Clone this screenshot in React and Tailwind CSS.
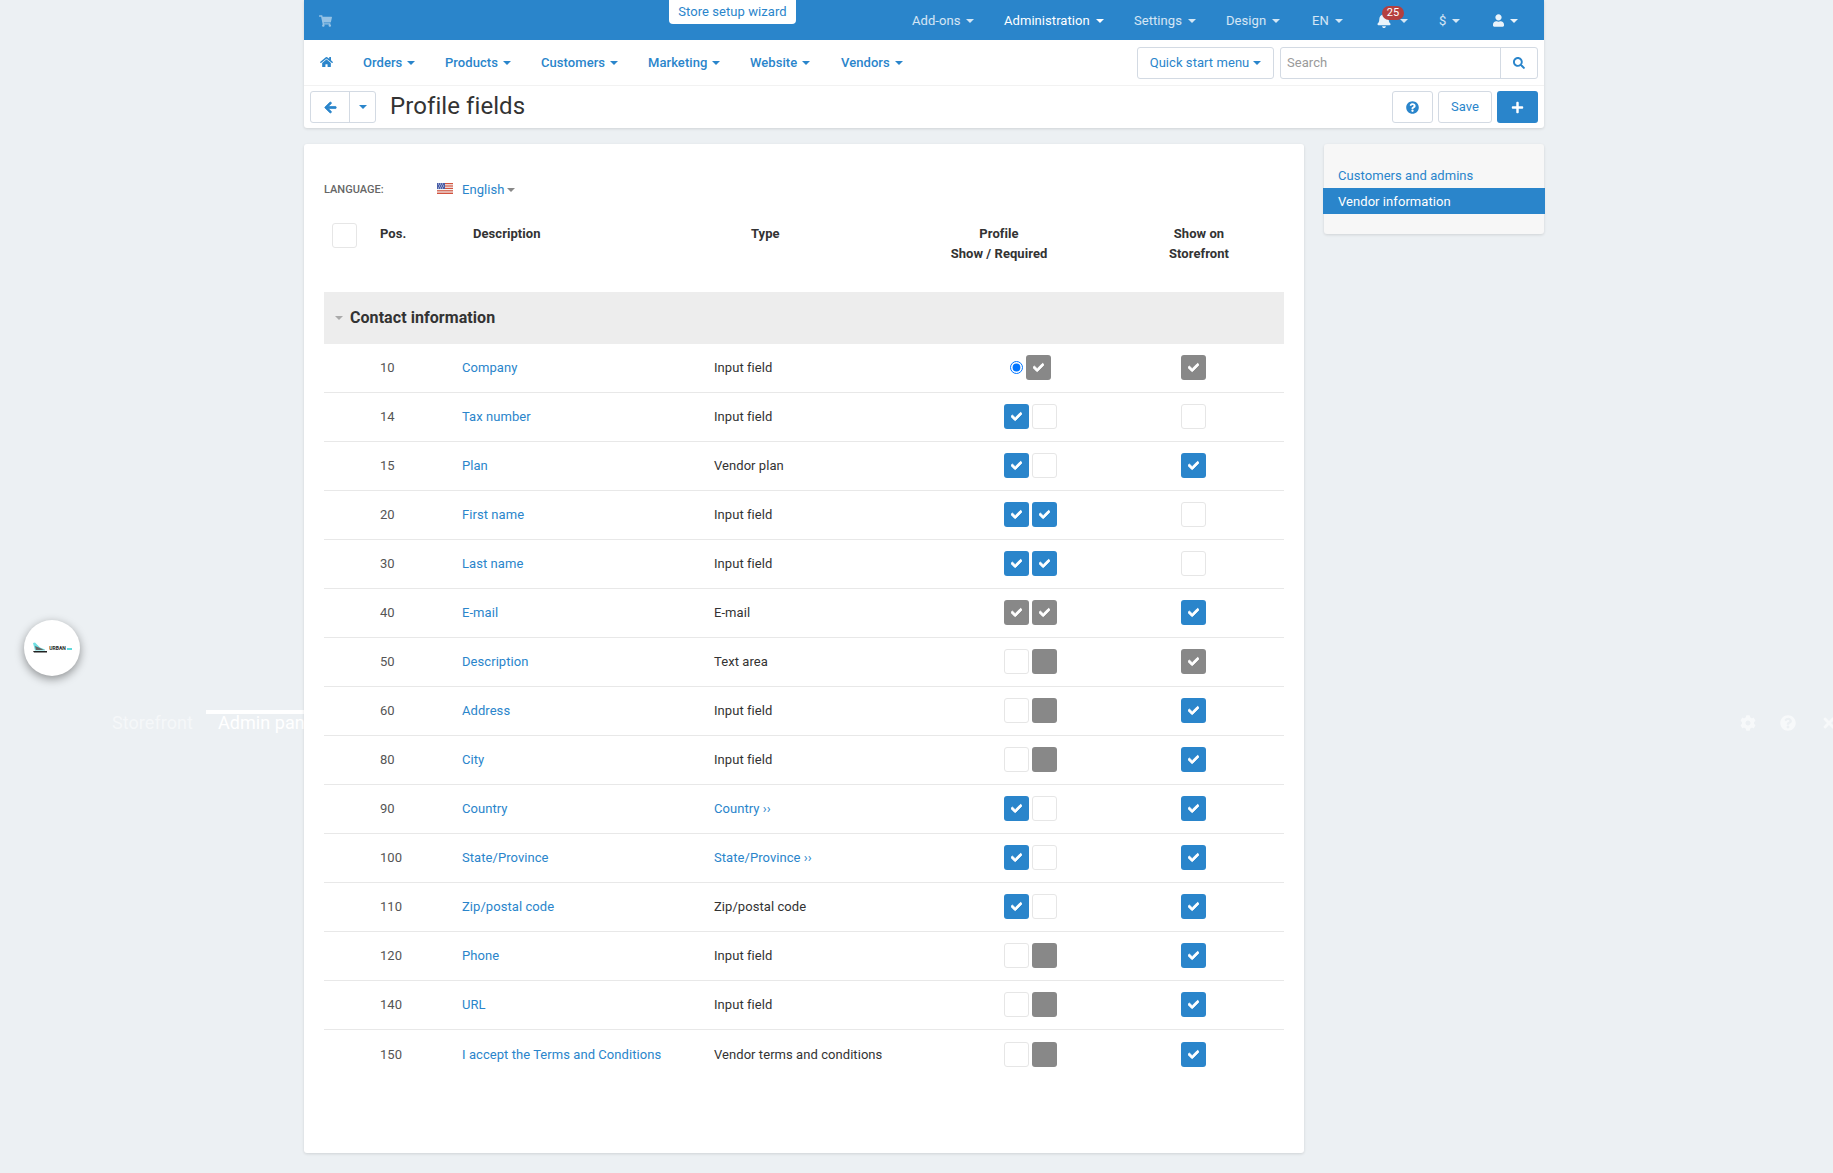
import React from "react";
import { FaHome, FaShoppingCart, FaBell, FaUser, FaSearch, FaQuestionCircle, FaPlus, FaArrowLeft, FaCheck, FaCog, FaTimes } from "react-icons/fa";

const Caret = ({ className = "" }) => (
  <span className={"inline-block w-0 h-0 border-x-[4px] border-t-[4px] border-x-transparent border-t-current align-middle " + className} />
);

const topItems = [
  ["Add-ons", "w-[92px]", "text-white/80"],
  ["Administration", "w-[130px]", "text-white"],
  ["Settings", "w-[92px]", "text-white/80"],
  ["Design", "w-[86px]", "text-white/80"],
  ["EN", "w-[66px]", "text-white/80"],
];

const navItems = [
  ["Orders", "w-[82px]"],
  ["Products", "w-[96px]"],
  ["Customers", "w-[107px]"],
  ["Marketing", "w-[102px]"],
  ["Website", "w-[91px]"],
  ["Vendors", "w-[91px]"],
];

const rows = [
  ["10", "Company", "Input field", false, "radio", "gc", "gc"],
  ["14", "Tax number", "Input field", false, "bc", "u", "u"],
  ["15", "Plan", "Vendor plan", false, "bc", "u", "bc"],
  ["20", "First name", "Input field", false, "bc", "bc", "u"],
  ["30", "Last name", "Input field", false, "bc", "bc", "u"],
  ["40", "E-mail", "E-mail", false, "gc", "gc", "bc"],
  ["50", "Description", "Text area", false, "u", "g", "gc"],
  ["60", "Address", "Input field", false, "u", "g", "bc"],
  ["80", "City", "Input field", false, "u", "g", "bc"],
  ["90", "Country", "Country ››", true, "bc", "u", "bc"],
  ["100", "State/Province", "State/Province ››", true, "bc", "u", "bc"],
  ["110", "Zip/postal code", "Zip/postal code", false, "bc", "u", "bc"],
  ["120", "Phone", "Input field", false, "u", "g", "bc"],
  ["140", "URL", "Input field", false, "u", "g", "bc"],
  ["150", "I accept the Terms and Conditions", "Vendor terms and conditions", false, "u", "g", "bc"],
];

function Box({ kind }) {
  if (kind === "u") return <span className="block w-[25px] h-[25px] rounded-[3px] bg-white border border-[#e6e6e6]" />;
  if (kind === "g") return <span className="block w-[25px] h-[25px] rounded-[3px] bg-[#888888]" />;
  const bg = kind === "bc" ? "bg-[#2a85cb]" : "bg-[#888888]";
  return (
    <span className={"flex items-center justify-center w-[25px] h-[25px] rounded-[3px] text-white " + bg}>
      <FaCheck className="w-[11px] h-[11px]" stroke="currentColor" strokeWidth={40} />
    </span>
  );
}

function FlagUS() {
  return (
    <svg width="16" height="11" viewBox="0 0 16 11" className="block">
      <rect width="16" height="11" fill="#f4f4f4" />
      <rect y="0" width="16" height="1.2" fill="#d2543f" />
      <rect y="2.4" width="16" height="1.2" fill="#d2543f" />
      <rect y="4.8" width="16" height="1.2" fill="#d2543f" />
      <rect y="7.2" width="16" height="1.2" fill="#d2543f" />
      <rect y="9.6" width="16" height="1.4" fill="#d2543f" />
      <rect width="8" height="6" fill="#4a5fa8" />
      <path d="M1 1h1M3 1h1M5 1h1M2 3h1M4 3h1M6 3h1M1 5h1M3 5h1M5 5h1" stroke="#fff" strokeWidth="0.8" />
    </svg>
  );
}

export default function App() {
  return (
    <div className="relative h-[1173px] overflow-hidden bg-[#ecf0f3] font-['Roboto',sans-serif] text-[13px] tracking-[0.06px] text-[#333333]">
      {/* dimmed layer under the admin page */}
      <div className="absolute left-[206px] top-[710px] w-[98px] h-[4px] bg-white" />
      <span className="absolute left-[112px] top-[712px] text-[18px] leading-[22px] text-white/50">Storefront</span>
      <span className="absolute left-[218px] top-[712px] text-[18px] leading-[22px] text-white">Admin panel</span>
      <FaCog className="absolute left-[1740px] top-[715px] w-[16px] h-[16px] text-white/60" />
      <FaQuestionCircle className="absolute left-[1780px] top-[715px] w-[16px] h-[16px] text-white/60" />
      <FaTimes className="absolute left-[1822px] top-[715px] w-[14px] h-[16px] text-white/60" />

      {/* floating logo */}
      <div className="absolute left-[24px] top-[620px] z-20 w-[56px] h-[56px] rounded-full bg-white shadow-[0_3px_10px_rgba(0,0,0,0.4)] flex items-center justify-center gap-[1px]">
        <svg width="16" height="12" viewBox="0 0 16 12">
          <path d="M1 9h14v1.5H2z" fill="#222" />
          <path d="M1 1l2-.5 5 5 5 2v1H3z" fill="#6fdfe2" />
          <path d="M3 4l5 2 4 2H4z" fill="#666" />
        </svg>
        <span className="text-[5px] leading-none font-bold text-[#222] tracking-normal">URBAN</span>
        <span className="w-[5px] h-[2px] mt-[2px] bg-[#5fd9dc]" />
      </div>

      <div className="relative z-10 ml-[304px] w-[1240px]">
        {/* header */}
        <div className="bg-white rounded-b-[3px] shadow-[0_1px_3px_rgba(0,0,0,0.12)]">
          <div className="relative h-[40px] bg-[#2a85cb] flex items-center pl-[15px]">
            <FaShoppingCart className="w-[13px] h-[12px] mt-[1px] text-white/50" />
            <button className="absolute left-[365px] top-0 w-[127px] h-[24px] bg-white rounded-b-[4px] text-[#2a85cb] text-[13px] leading-[22px]">
              Store setup wizard
            </button>
            <div className="ml-auto flex items-center pt-[1px]">
              {topItems.map(([t, w, c]) => (
                <div key={t} className={"flex items-center gap-[6px] " + w + " " + c}>
                  <span>{t}</span>
                  <Caret />
                </div>
              ))}
              <div className="relative w-[61px] flex items-center gap-[9px] text-white/80 -ml-[1px] mr-[1px]">
                <FaBell className="w-[14px] h-[15px] text-white/90" />
                <Caret />
                <span className="absolute left-[5px] top-[-7px] w-[22px] h-[14px] rounded-[7px] bg-[#b53f3f] text-white text-[11px] leading-[14px] text-center tracking-normal">25</span>
              </div>
              <div className="w-[54px] flex items-center gap-[6px] text-white/80">
                <span>$</span>
                <Caret />
              </div>
              <div className="w-[51px] flex items-center gap-[6px] text-white/90">
                <FaUser className="w-[11px] h-[13px]" />
                <Caret />
              </div>
            </div>
          </div>

          <div className="h-[46px] border-b border-[#f2f2f2] flex items-center pl-[16px] pr-[6px] text-[#2a85cb]">
            <div className="w-[43px]">
              <FaHome className="w-[13px] h-[12px] mb-[2px]" />
            </div>
            {navItems.map(([t, w]) => (
              <div key={t} className={"flex items-center gap-[5px] font-medium " + w}>
                <span>{t}</span>
                <Caret />
              </div>
            ))}
            <button className="ml-auto h-[32px] w-[137px] rounded-[3px] border border-[#d3dae3] flex items-center justify-center gap-[4px] text-[#2a85cb]">
              <span>Quick start menu</span>
              <Caret />
            </button>
            <div className="ml-[6px] h-[32px] w-[258px] rounded-[3px] border border-[#d3dae3] flex items-center">
              <span className="flex-1 pl-[6px] text-[#9a9a9a]">Search</span>
              <span className="w-[37px] h-full border-l border-[#d3dae3] flex items-center justify-center">
                <FaSearch className="w-[12px] h-[12px]" />
              </span>
            </div>
          </div>

          <div className="h-[42px] flex items-center pl-[6px] pr-[6px]">
            <div className="h-[32px] w-[66px] rounded-[3px] border border-[#d3dae3] flex items-center text-[#2a85cb]">
              <span className="w-[39px] h-full border-r border-[#d3dae3] flex items-center justify-center">
                <FaArrowLeft className="w-[13px] h-[13px]" stroke="currentColor" strokeWidth={30} />
              </span>
              <span className="flex-1 flex items-center justify-center">
                <Caret />
              </span>
            </div>
            <h1 className="ml-[14px] text-[24px] leading-[30px] tracking-[0.08px] font-normal text-[#333333] mb-[2px]">Profile fields</h1>
            <div className="ml-auto flex items-center gap-[5px] text-[#2a85cb]">
              <button className="w-[41px] h-[32px] rounded-[3px] border border-[#d3dae3] flex items-center justify-center">
                <FaQuestionCircle className="w-[13px] h-[13px]" />
              </button>
              <button className="w-[54px] h-[32px] rounded-[3px] border border-[#d3dae3]">Save</button>
              <button className="w-[41px] h-[32px] rounded-[3px] bg-[#2a85cb] text-white flex items-center justify-center">
                <FaPlus className="w-[13px] h-[13px]" />
              </button>
            </div>
          </div>
        </div>

        {/* content */}
        <div className="mt-[16px] flex items-start gap-[20px]">
          <div className="w-[1000px] h-[1009px] bg-white rounded-[3px] shadow-[0_1px_3px_rgba(0,0,0,0.12)] px-[20px] pt-[36px]">
            <div className="flex items-center h-[18px] pt-[2px]">
              <span className="w-[113px] text-[11px] font-medium text-[#666666] tracking-normal">LANGUAGE:</span>
              <span className="-mt-[4px]">
                <FlagUS />
              </span>
              <span className="ml-[9px] text-[#2a85cb]">English</span>
              <Caret className="ml-[3px] text-[#888888]" />
            </div>

            <div className="mt-[25px] h-[69px] grid grid-cols-[56px_93px_278px_153px_190px_190px] font-bold leading-[20px]">
              <div className="pl-[8px]">
                <span className="block w-[25px] h-[25px] rounded-[3px] bg-white border border-[#e6e6e6]" />
              </div>
              <div className="pt-[1px]">Pos.</div>
              <div className="pt-[1px]">Description</div>
              <div className="pt-[1px]">Type</div>
              <div className="pt-[1px] text-center">
                Profile
                <br />
                Show / Required
              </div>
              <div className="pt-[1px] pl-[20px] text-center">
                Show on
                <br />
                Storefront
              </div>
            </div>

            <div className="h-[52px] bg-[#ededed] flex items-center pl-[11px]">
              <Caret className="text-[#aaaaaa]" />
              <span className="ml-[7px] text-[16px] font-bold text-[#333333]">Contact information</span>
            </div>

            {rows.map(([pos, name, type, typeLink, a, b, c], i) => (
              <div
                key={pos}
                className={"h-[49px] grid grid-cols-[56px_82px_252px_290px_177px_103px] items-center " + (i < rows.length - 1 ? "border-b border-[#e8e8e8]" : "")}
              >
                <div />
                <div className="text-[#555555]">{pos}</div>
                <div className="text-[#2a85cb]">{name}</div>
                <div className={typeLink ? "text-[#2a85cb]" : "text-[#333333]"}>{type}</div>
                <div className="flex items-center gap-[3px] mb-[1px]">
                  {a === "radio" ? (
                    <>
                      <input type="radio" defaultChecked className="w-[13px] h-[13px] m-0 ml-[6px]" />
                      <Box kind={b} />
                    </>
                  ) : (
                    <>
                      <Box kind={a} />
                      <Box kind={b} />
                    </>
                  )}
                </div>
                <div className="mb-[1px]">
                  <Box kind={c} />
                </div>
              </div>
            ))}
          </div>

          <div className="w-[220px] h-[90px] bg-[#f7f7f7] rounded-[3px] shadow-[0_1px_3px_rgba(0,0,0,0.12)] pt-[18px]">
            <div className="h-[26px] leading-[28px] pl-[14px] text-[#2a85cb]">Customers and admins</div>
            <div className="-mx-px h-[26px] leading-[28px] pl-[15px] bg-[#2a85cb] text-white">Vendor information</div>
          </div>
        </div>
      </div>
    </div>
  );
}
